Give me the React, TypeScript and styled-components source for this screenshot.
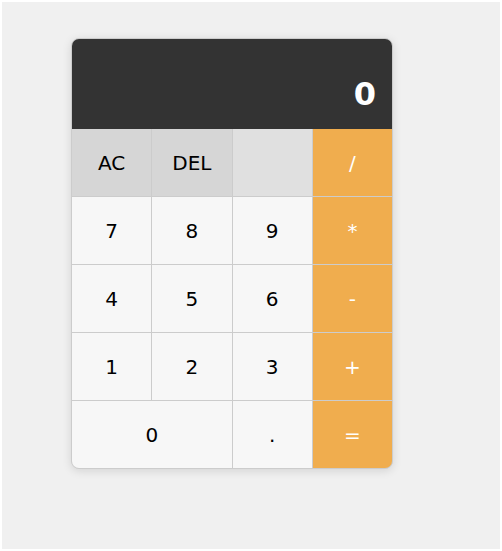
import React from "react";
import styled, { createGlobalStyle } from "styled-components";

const GlobalStyle = createGlobalStyle`
  * {
    box-sizing: border-box;
  }
  body {
    margin: 0;
    background: #fff;
    font-family: "DejaVu Sans", Verdana, sans-serif;
  }
`;

const Page = styled.div`
  margin: 2px;
  height: 547px;
  background: #f0f0f0;
  padding: 36px 0 0 69px;
`;

const Calculator = styled.div`
  width: 322px;
  border-radius: 8px;
  overflow: hidden;
  border: 1px solid #ccc;
  box-shadow: 0 2px 10px rgba(0, 0, 0, 0.12);
  background: #ccc;
`;

const Display = styled.div`
  height: 90px;
  background: #333;
  color: #fff;
  display: flex;
  align-items: flex-end;
  justify-content: flex-end;
  padding: 0 16px 16px;
  font-size: 32px;
  font-weight: 700;
`;

const Keys = styled.div`
  display: grid;
  grid-template-columns: repeat(4, 1fr);
  grid-auto-rows: 67px;
  gap: 1px;
`;

type Kind = "num" | "fn" | "blank" | "op";

const colors: Record<Kind, { bg: string; fg: string }> = {
  num: { bg: "#f7f7f7", fg: "#000" },
  fn: { bg: "#d6d6d6", fg: "#000" },
  blank: { bg: "#e0e0e0", fg: "#000" },
  op: { bg: "#f0ad4e", fg: "#fff" },
};

const Key = styled.button<{ $kind: Kind; $span?: number }>`
  grid-column: span ${(p) => p.$span || 1};
  border: 0;
  margin: 0;
  padding: 0;
  background: ${(p) => colors[p.$kind].bg};
  color: ${(p) => colors[p.$kind].fg};
  font-family: "DejaVu Sans", Verdana, sans-serif;
  font-size: 20px;
  cursor: pointer;
`;

const keys: { label: string; kind: Kind; span?: number }[] = [
  { label: "AC", kind: "fn" },
  { label: "DEL", kind: "fn" },
  { label: "", kind: "blank" },
  { label: "/", kind: "op" },
  { label: "7", kind: "num" },
  { label: "8", kind: "num" },
  { label: "9", kind: "num" },
  { label: "*", kind: "op" },
  { label: "4", kind: "num" },
  { label: "5", kind: "num" },
  { label: "6", kind: "num" },
  { label: "-", kind: "op" },
  { label: "1", kind: "num" },
  { label: "2", kind: "num" },
  { label: "3", kind: "num" },
  { label: "+", kind: "op" },
  { label: "0", kind: "num", span: 2 },
  { label: ".", kind: "num" },
  { label: "=", kind: "op" },
];

export default function App() {
  return (
    <>
      <GlobalStyle />
      <Page>
        <Calculator>
          <Display>0</Display>
          <Keys>
            {keys.map((k, i) => (
              <Key key={i} $kind={k.kind} $span={k.span}>
                {k.label}
              </Key>
            ))}
          </Keys>
        </Calculator>
      </Page>
    </>
  );
}
